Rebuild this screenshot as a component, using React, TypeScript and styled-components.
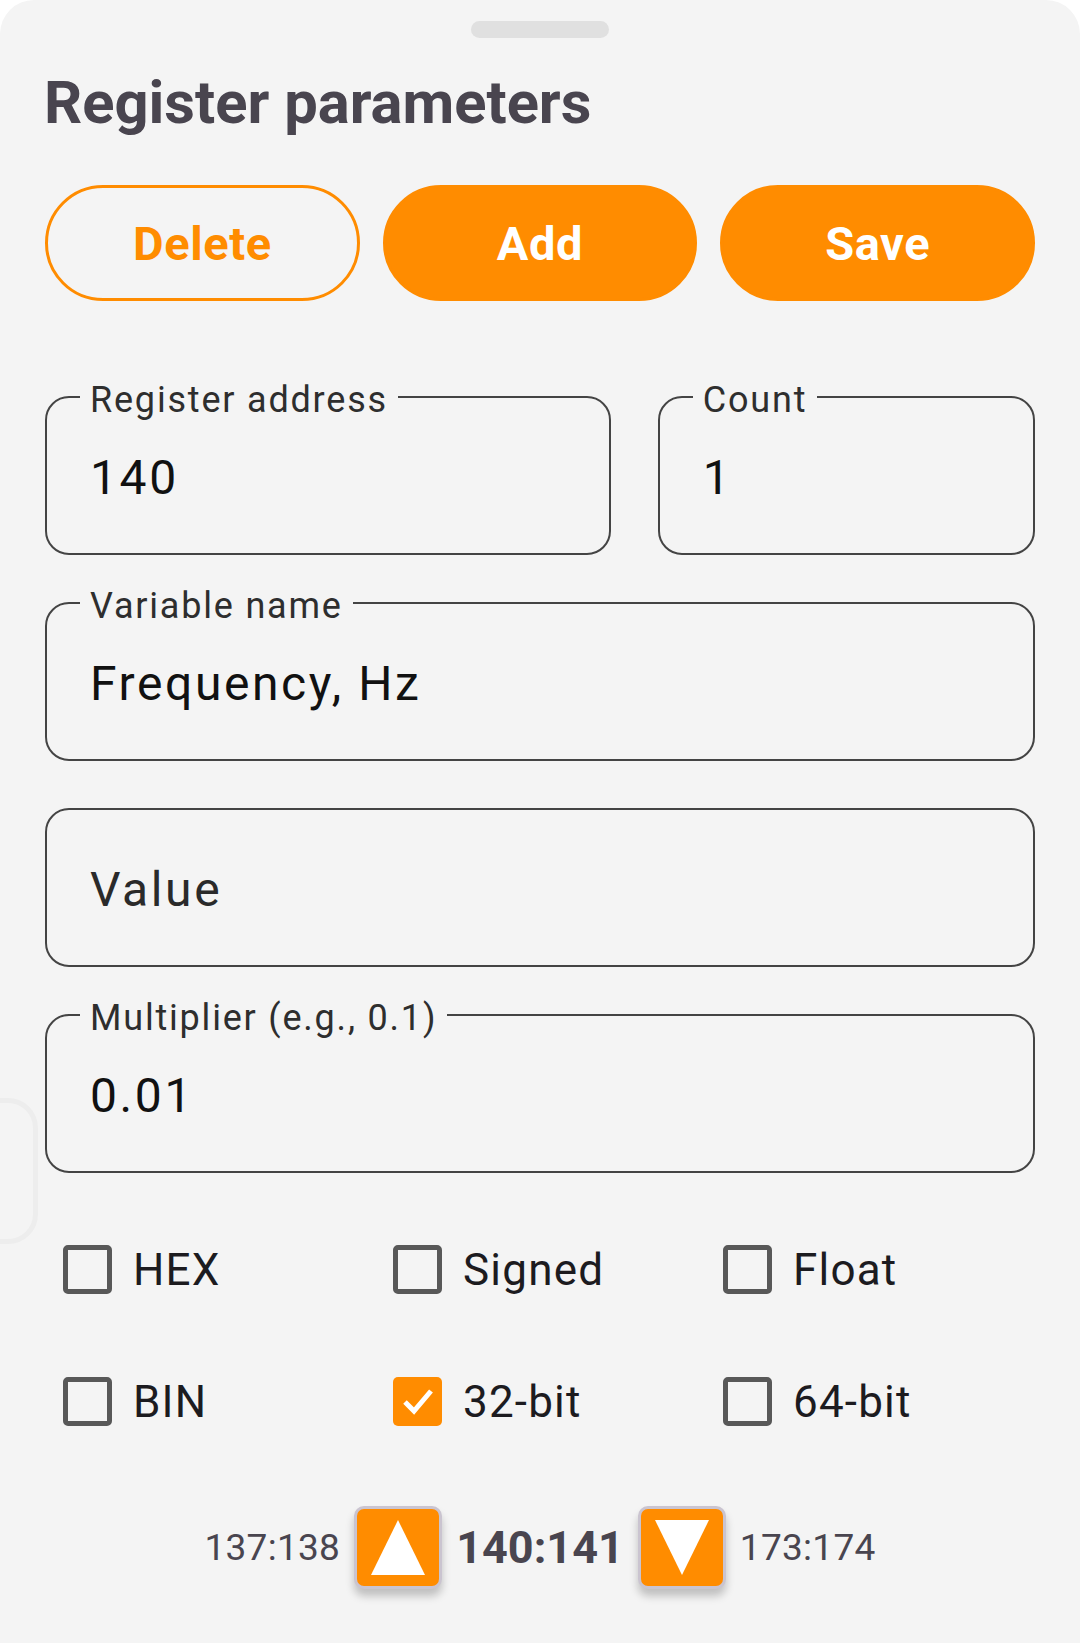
import styled, { createGlobalStyle } from "styled-components";

const GlobalStyle = createGlobalStyle`
  html, body {
    margin: 0;
    padding: 0;
    background: #ffffff;
  }
  body {
    font-family: Roboto, "Noto Sans", "Liberation Sans", sans-serif;
  }
  * {
    box-sizing: border-box;
  }
`;

const ORANGE = "#ff8c00";

const fields = [
  { label: "Variable name", value: "Frequency, Hz" },
  { label: "", value: "Value", placeholder: true },
  { label: "Multiplier (e.g., 0.1)", value: "0.01" },
];

const flags = [
  { label: "HEX", checked: false },
  { label: "Signed", checked: false },
  { label: "Float", checked: false },
  { label: "BIN", checked: false },
  { label: "32-bit", checked: true },
  { label: "64-bit", checked: false },
];

export default function App() {
  return (
    <>
      <GlobalStyle />
      <Sheet>
        <EdgeHint />
        <Handle />
        <Title>Register parameters</Title>

        <ButtonRow>
          <ActionButton $outlined>Delete</ActionButton>
          <ActionButton>Add</ActionButton>
          <ActionButton>Save</ActionButton>
        </ButtonRow>

        <FieldList>
          <SplitRow>
            <Field>
              <FieldLabel>Register address</FieldLabel>
              <FieldValue>140</FieldValue>
            </Field>
            <Field>
              <FieldLabel>Count</FieldLabel>
              <FieldValue>1</FieldValue>
            </Field>
          </SplitRow>
          {fields.map((f) => (
            <Field key={f.value}>
              {f.label && <FieldLabel>{f.label}</FieldLabel>}
              <FieldValue $placeholder={f.placeholder}>{f.value}</FieldValue>
            </Field>
          ))}
        </FieldList>

        <FlagGrid>
          {flags.map((f) => (
            <Flag key={f.label}>
              <CheckBox $checked={f.checked}>
                {f.checked && (
                  <svg width="40" height="40" viewBox="0 0 40 40">
                    <polyline
                      points="7,21 16,30 33,10"
                      fill="none"
                      stroke="#fff"
                      strokeWidth="5"
                    />
                  </svg>
                )}
              </CheckBox>
              <FlagLabel>{f.label}</FlagLabel>
            </Flag>
          ))}
        </FlagGrid>

        <Stepper>
          <SideAddress>137:138</SideAddress>
          <StepButton>
            <svg width="56" height="56" viewBox="0 0 56 56">
              <polygon points="28,0 55,55 1,55" fill="#fff" />
            </svg>
          </StepButton>
          <CurrentAddress>140:141</CurrentAddress>
          <StepButton>
            <svg width="56" height="56" viewBox="0 0 56 56">
              <polygon points="1,0 55,0 28,55" fill="#fff" />
            </svg>
          </StepButton>
          <SideAddress>173:174</SideAddress>
        </Stepper>
      </Sheet>
    </>
  );
}

const Sheet = styled.main`
  position: relative;
  width: 1080px;
  min-height: 1643px;
  background: #f4f4f4;
  border-radius: 34px 34px 0 0;
  padding: 0 45px;
  display: flex;
  flex-direction: column;
  overflow: hidden;
`;

const EdgeHint = styled.div`
  position: absolute;
  left: -44px;
  top: 1098px;
  width: 82px;
  height: 146px;
  border: 5px solid #ededed;
  border-radius: 30px;
`;

const Handle = styled.div`
  align-self: center;
  margin-top: 21px;
  width: 138px;
  height: 17px;
  border-radius: 9px;
  background: #e0e0e0;
`;

const Title = styled.h1`
  margin: 30px 0 0 -1px;
  font-size: 59.7px;
  line-height: 70px;
  font-weight: 700;
  color: #49454f;
`;

const ButtonRow = styled.div`
  margin-top: 47px;
  display: grid;
  grid-template-columns: repeat(3, 1fr);
  gap: 23px;
`;

const ActionButton = styled.button<{ $outlined?: boolean }>`
  height: 116px;
  border-radius: 58px;
  border: 3px solid ${ORANGE};
  background: ${(p) => (p.$outlined ? "transparent" : ORANGE)};
  color: ${(p) => (p.$outlined ? ORANGE : "#ffffff")};
  font-family: Roboto, sans-serif;
  font-size: 47px;
  font-weight: 700;
  letter-spacing: 0.6px;
  padding: 0;
`;

const FieldList = styled.div`
  margin-top: 95px;
  display: flex;
  flex-direction: column;
  gap: 47px;
`;

const SplitRow = styled.div`
  display: grid;
  grid-template-columns: 3fr 2fr;
  gap: 47px;
`;

const Field = styled.div`
  position: relative;
  height: 159px;
  border: 2px solid #444444;
  border-radius: 24px;
  display: flex;
  align-items: center;
  padding: 4px 0 0 43px;
`;

const FieldLabel = styled.span`
  position: absolute;
  left: 33px;
  top: -16px;
  padding: 0 10px;
  background: #f4f4f4;
  font-size: 36px;
  line-height: 36px;
  letter-spacing: 1.8px;
  color: #2e2e2e;
  white-space: nowrap;
`;

const FieldValue = styled.span<{ $placeholder?: boolean }>`
  font-size: 48px;
  letter-spacing: 2.6px;
  color: ${(p) => (p.$placeholder ? "#2a2a2a" : "#111111")};
`;

const FlagGrid = styled.div`
  margin-top: 30px;
  display: grid;
  grid-template-columns: repeat(3, 1fr);
  grid-auto-rows: 132px;
`;

const Flag = styled.label`
  display: flex;
  align-items: center;
  gap: 21px;
  padding-left: 18px;
`;

const CheckBox = styled.span<{ $checked?: boolean }>`
  width: 49px;
  height: 49px;
  flex: none;
  border-radius: 5px;
  border: ${(p) => (p.$checked ? "none" : "5px solid #585858")};
  background: ${(p) => (p.$checked ? ORANGE : "transparent")};
  display: flex;
  align-items: center;
  justify-content: center;
`;

const FlagLabel = styled.span`
  font-size: 44px;
  letter-spacing: 1.2px;
  color: #1c1b1f;
  padding-top: 2px;
`;

const Stepper = styled.div`
  margin-top: 39px;
  display: flex;
  align-items: center;
  justify-content: center;
  gap: 14px;
`;

const SideAddress = styled.span`
  font-size: 37px;
  letter-spacing: 0.3px;
  color: #49454f;
`;

const CurrentAddress = styled.span`
  font-size: 45px;
  font-weight: 700;
  color: #49454f;
`;

const StepButton = styled.button`
  width: 88px;
  height: 83px;
  padding: 0;
  border: 3px solid #cac4d0;
  border-radius: 10px;
  background: ${ORANGE};
  box-shadow: 0 7px 9px rgba(0, 0, 0, 0.22);
  display: flex;
  align-items: center;
  justify-content: center;
`;
